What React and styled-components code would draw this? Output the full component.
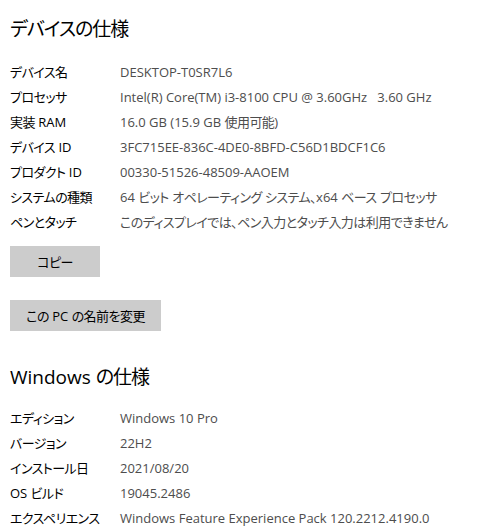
import React from "react";
import styled, { createGlobalStyle } from "styled-components";

const Global = createGlobalStyle`
  html, body { margin: 0; padding: 0; background: #ffffff; }
  body {
    font-family: "Open Sans", "Noto Sans CJK JP", sans-serif;
    font-feature-settings: "palt" 1;
  }
`;

const Page = styled.div`
  padding: 15px 10px 0 10px;
  width: 484px;
  height: 532px;
  box-sizing: border-box;
  overflow: hidden;
  --jp-track: -0.55px;
`;

/* Japanese runs are set a little tighter, like Yu Gothic UI */
const Jp = styled.span`
  letter-spacing: var(--jp-track);
`;

const CJK = /([\u3000-\u30ff\u3400-\u9fff\uff00-\uffef]+)/;

function T({ children }) {
  return String(children)
    .split(CJK)
    .map((part, i) =>
      i % 2 === 1 ? <Jp key={i}>{part}</Jp> : <React.Fragment key={i}>{part}</React.Fragment>
    );
}

const Heading = styled.h2`
  margin: 0;
  font-size: 19px;
  font-weight: 400;
  line-height: 28px;
  color: #000;
  --jp-track: -1px;
`;

const SecondHeading = styled(Heading)`
  margin-top: 32px;
`;

const Table = styled.div`
  display: grid;
  grid-template-columns: 110px 1fr;
  grid-auto-rows: 25px;
  margin-top: ${(p) => p.$top}px;
  align-items: center;
  font-size: 13px;
`;

const Label = styled.div`
  color: #000;
  white-space: nowrap;
`;

const Value = styled.div`
  color: #4d4d4d;
  white-space: pre;
`;

const Button = styled.button`
  display: block;
  box-sizing: border-box;
  height: 31px;
  width: ${(p) => p.$width}px;
  padding: 0;
  margin-top: ${(p) => p.$top}px;
  border: none;
  background: #cccccc;
  color: #000;
  font-family: inherit;
  font-feature-settings: "palt" 1;
  font-size: 13px;
`;

const device = [
  ["デバイス名", "DESKTOP-T0SR7L6"],
  ["プロセッサ", "Intel(R) Core(TM) i3-8100 CPU @ 3.60GHz   3.60 GHz"],
  ["実装 RAM", "16.0 GB (15.9 GB 使用可能)"],
  ["デバイス ID", "3FC715EE-836C-4DE0-8BFD-C56D1BDCF1C6"],
  ["プロダクト ID", "00330-51526-48509-AAOEM"],
  ["システムの種類", "64 ビット オペレーティング システム、x64 ベース プロセッサ"],
  ["ペンとタッチ", "このディスプレイでは、ペン入力とタッチ入力は利用できません"],
];

const windows = [
  ["エディション", "Windows 10 Pro"],
  ["バージョン", "22H2"],
  ["インストール日", "2021/08/20"],
  ["OS ビルド", "19045.2486"],
  ["エクスペリエンス", "Windows Feature Experience Pack 120.2212.4190.0"],
];

function SpecTable({ rows, top }) {
  return (
    <Table $top={top}>
      {rows.map(([l, v]) => (
        <React.Fragment key={l}>
          <Label><T>{l}</T></Label>
          <Value><T>{v}</T></Value>
        </React.Fragment>
      ))}
    </Table>
  );
}

export default function App() {
  return (
    <>
      <Global />
      <Page>
        <Heading><T>デバイスの仕様</T></Heading>
        <SpecTable rows={device} top={16} />
        <Button $top={12} $width={90}><T>コピー</T></Button>
        <Button $top={23} $width={151}><T>この PC の名前を変更</T></Button>
        <SecondHeading><T>Windows の仕様</T></SecondHeading>
        <SpecTable rows={windows} top={14} />
      </Page>
    </>
  );
}
